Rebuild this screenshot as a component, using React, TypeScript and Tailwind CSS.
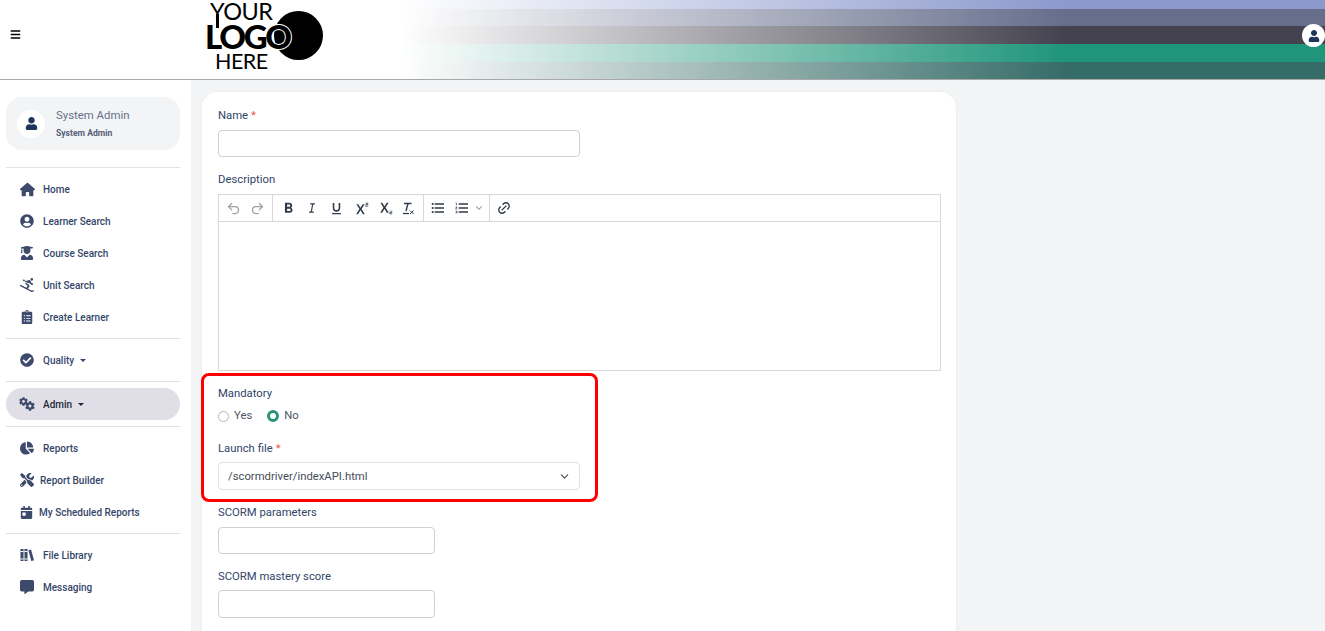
import React from "react";
import { FaBars, FaUser, FaUserCircle, FaUserGraduate, FaSkiing, FaClipboardList, FaCheckCircle, FaCog, FaChartPie, FaTools, FaCalendarDay, FaCommentAlt } from "react-icons/fa";
import { FaHouse } from "react-icons/fa6";
import { MdFormatBold, MdFormatUnderlined, MdSuperscript, MdSubscript, MdFormatListBulleted, MdFormatListNumbered } from "react-icons/md";
import { RiItalic, RiLinkM, RiArrowDownSLine } from "react-icons/ri";
import { LuUndo2, LuRedo2, LuChevronDown } from "react-icons/lu";

const Books = ({ size = 14 }: { size?: number }) => (
  <svg width={size} height={size} viewBox="0 0 14 14" fill="currentColor">
    <rect x="0.5" y="1" width="3" height="12" />
    <rect x="4.5" y="1" width="3" height="12" />
    <path d="M8.4 2.2 11 1.4 14 12.3 11.3 13z" />
    <rect x="0.5" y="3" width="3" height="1" fill="#fff" />
    <rect x="4.5" y="3" width="3" height="1" fill="#fff" />
    <rect x="0.5" y="10.5" width="3" height="1" fill="#fff" />
    <rect x="4.5" y="10.5" width="3" height="1" fill="#fff" />
  </svg>
);

const ClearFormat = () => (
  <svg width="14" height="14" viewBox="0 0 14 14" fill="none" stroke="currentColor">
    <path d="M3 2.5H10.5M7 2.5 5 10" strokeWidth="1.4" />
    <path d="M2 12.5H8" strokeWidth="1.3" />
    <path d="M9 9.5 12.5 13M12.5 9.5 9 13" strokeWidth="1" />
  </svg>
);

const Gears = () => (
  <span className="relative ml-[-1px] block h-[14px] w-[16px]">
    <FaCog size={9} className="absolute left-0 top-0" />
    <FaCog size={10} className="absolute left-[6px] top-[4px]" />
  </span>
);

type Item = { label: string; icon: React.ReactNode; box?: string; caret?: boolean; active?: boolean };

const Nav = ({ label, icon, box = "w-[23px]", caret, active }: Item) => (
  <div className={`flex h-8 items-center rounded-2xl pl-[14px] text-[10px] font-medium ${active ? "bg-[#e0dfe8] text-[#1f2937]" : "text-[#34466a]"}`}>
    <span className={`${box} shrink-0 text-[#3d4a6b]`}>{icon}</span>
    <span className="pt-[1px]">{label}</span>
    {caret && <span className="ml-[6px] h-0 w-0 border-x-[3px] border-t-[3px] border-x-transparent border-t-current" />}
  </div>
);

const Section = ({ items, cls = "py-[5px]" }: { items: Item[]; cls?: string }) => (
  <div className={`${cls} border-b border-[#e2e2e2]`}>
    {items.map((i) => <Nav key={i.label} {...i} />)}
  </div>
);

const Label = ({ children, req }: { children: React.ReactNode; req?: boolean }) => (
  <div className="h-4 text-[11.3px] leading-4 text-[#2f4468]">
    {children}
    {req && <span className="ml-[3px] text-[#f0524a]">*</span>}
  </div>
);

const Input = ({ cls }: { cls: string }) => (
  <div className={`${cls} rounded border border-[#d0d0d0] bg-white`} />
);

const Tool = ({ children, cls = "text-[#2f3a4a]" }: { children: React.ReactNode; cls?: string }) => (
  <span className={`flex w-6 justify-center ${cls}`}>{children}</span>
);

export default function App() {
  return (
    <div className="flex h-[631px] flex-col overflow-hidden bg-[#f3f4f6] font-['Roboto',sans-serif]">
      <header className="relative flex h-20 shrink-0 border-b border-[#a8a8a8] bg-white">
        <div className="flex w-[400px] shrink-0 items-center">
          <FaBars size={11} className="ml-[10px] mt-[-10px] text-black" />
          <div className="relative ml-[185px] h-[79px] w-[125px] text-black font-['Lato',sans-serif]">
            <div className="absolute left-[68px] top-[11px] h-[49px] w-[49px] rounded-full bg-black" />
            <div className="absolute left-[10px] top-[14px] h-[14px] w-[3px] bg-black" />
            <div className="absolute left-[4px] top-[1px] text-[23.5px] leading-[20px] tracking-[-0.5px]">YOUR</div>
            <div className="absolute left-[-1px] top-[23px] text-[33px] font-black leading-[26px] tracking-[-2.3px] [-webkit-text-stroke:2px_white] [paint-order:stroke]">LOGO</div>
            <div className="absolute left-[9px] top-[51px] text-[21.5px] leading-[20px] tracking-[-0.5px]">HERE</div>
          </div>
        </div>
        <div className="flex flex-1 flex-col">
          <div className="h-[9px] bg-[linear-gradient(90deg,#fff_0%,#dfe3f2_20%,#8b99cc_72%)]" />
          <div className="h-[17px] bg-[linear-gradient(90deg,#fff_0%,#666e8c_72%)]" />
          <div className="h-[18px] bg-[linear-gradient(90deg,#fff_0%,#45424f_72%)]" />
          <div className="h-[18px] bg-[linear-gradient(90deg,#fff_0%,#1f957a_72%)]" />
          <div className="h-[17px] bg-[linear-gradient(90deg,#fff_0%,#366c68_72%)]" />
        </div>
        <div className="absolute left-[1302px] top-6 flex h-[23px] w-[23px] items-center justify-center rounded-full bg-white text-[#1e3458]">
          <FaUser size={12} />
        </div>
      </header>

      <div className="flex min-h-0 flex-1">
        <aside className="w-[191px] shrink-0 bg-white pl-[6px] pr-[11px]">
          <div className="mt-[17px] flex h-[53px] items-center rounded-2xl bg-[#f3f4f6] pl-[11px]">
            <div className="flex h-7 w-7 items-center justify-center rounded-full bg-white text-[#1e3458]">
              <FaUser size={13} />
            </div>
            <div className="ml-[11px] mt-[1px]">
              <div className="text-[11.4px] leading-[17px] text-[#66708a]">System Admin</div>
              <div className="mt-[1px] text-[8.6px] font-bold leading-[16px] text-[#55607a]">System Admin</div>
            </div>
          </div>
          <div className="mt-[17px] border-t border-[#e2e2e2]" />
          <Section items={[
            { label: "Home", icon: <FaHouse size={15} /> },
            { label: "Learner Search", icon: <FaUserCircle size={14} /> },
            { label: "Course Search", icon: <FaUserGraduate size={14} /> },
            { label: "Unit Search", icon: <FaSkiing size={14} /> },
            { label: "Create Learner", icon: <FaClipboardList size={14} /> },
          ]} />
          <Section items={[{ label: "Quality", icon: <FaCheckCircle size={14} />, caret: true }]} />
          <Section cls="py-[6px]" items={[{ label: "Admin", icon: <Gears />, caret: true, active: true }]} />
          <Section items={[
            { label: "Reports", icon: <FaChartPie size={14} /> },
            { label: "Report Builder", icon: <FaTools size={14} />, box: "w-[20px]" },
            { label: "My Scheduled Reports", icon: <FaCalendarDay size={13} />, box: "w-[19px]" },
          ]} />
          <div className="py-[5px]">
            <Nav label="File Library" icon={<Books />} />
            <Nav label="Messaging" icon={<FaCommentAlt size={14} />} />
          </div>
        </aside>

        <main className="min-w-0 flex-1 pl-[10px] pt-[11px]">
          <div className="h-full w-[756px] rounded-t-2xl border border-b-0 border-[#efefef] bg-white px-4 pt-4">
            <Label req>Name</Label>
            <Input cls="mt-[6px] h-[27px] w-[362px]" />
            <div className="mt-[15px]"><Label>Description</Label></div>
            <div className="mt-[6px] h-[177px] w-[723px] border border-[#d8d8d8]">
              <div className="flex h-[27px] items-center border-b border-[#d8d8d8]">
                <div className="flex h-full w-[54px] items-center border-r border-[#d8d8d8] pl-[2px]">
                  <Tool cls="text-[#9aa0a8]"><LuUndo2 size={15} /></Tool>
                  <Tool cls="text-[#9aa0a8]"><LuRedo2 size={15} /></Tool>
                </div>
                <div className="flex h-full w-[151px] items-center border-r border-[#d8d8d8] pl-[3px]">
                  <Tool><MdFormatBold size={17} /></Tool>
                  <Tool><RiItalic size={14} /></Tool>
                  <Tool><MdFormatUnderlined size={15} /></Tool>
                  <Tool><MdSuperscript size={17} /></Tool>
                  <Tool><MdSubscript size={17} /></Tool>
                  <Tool><ClearFormat /></Tool>
                </div>
                <div className="flex h-full w-[66px] items-center border-r border-[#d8d8d8] pl-[2px]">
                  <Tool><MdFormatListBulleted size={16} /></Tool>
                  <Tool><MdFormatListNumbered size={16} /></Tool>
                  <RiArrowDownSLine size={12} className="ml-[-1px] text-[#9aa0a8]" />
                </div>
                <div className="pl-[2px]"><Tool><RiLinkM size={16} /></Tool></div>
              </div>
            </div>

            <div className="relative mt-[15px] w-[362px]">
              <div className="pointer-events-none absolute bottom-[-12px] left-[-17px] right-[-18px] top-[-13px] rounded-lg border-[3px] border-[#ff0000]" />
              <Label>Mandatory</Label>
              <div className="mt-[6px] flex h-4 items-center text-[11.3px] text-[#4b5563]">
                <span className="h-[11px] w-[11px] rounded-full border border-[#b5b5b5]" />
                <span className="ml-[5px]">Yes</span>
                <span className="ml-[15px] h-[12px] w-[12px] rounded-full border-[3px] border-[#2a9379]" />
                <span className="ml-[5px]">No</span>
              </div>
              <div className="mt-[17px]"><Label req>Launch file</Label></div>
              <div className="mt-[5px] flex h-[28px] items-center justify-between rounded border border-[#e2e2e2] bg-white pl-[9px] pr-[8px] text-[11.3px] text-[#444c58]">
                <span className="pt-[2px]">/scormdriver/indexAPI.html</span>
                <LuChevronDown size={13} />
              </div>
            </div>

            <div className="mt-[15px]"><Label>SCORM parameters</Label></div>
            <Input cls="mt-[6px] h-[27px] w-[217px]" />
            <div className="mt-[15px]"><Label>SCORM mastery score</Label></div>
            <Input cls="mt-[5px] h-[28px] w-[217px]" />
          </div>
        </main>
      </div>
    </div>
  );
}
